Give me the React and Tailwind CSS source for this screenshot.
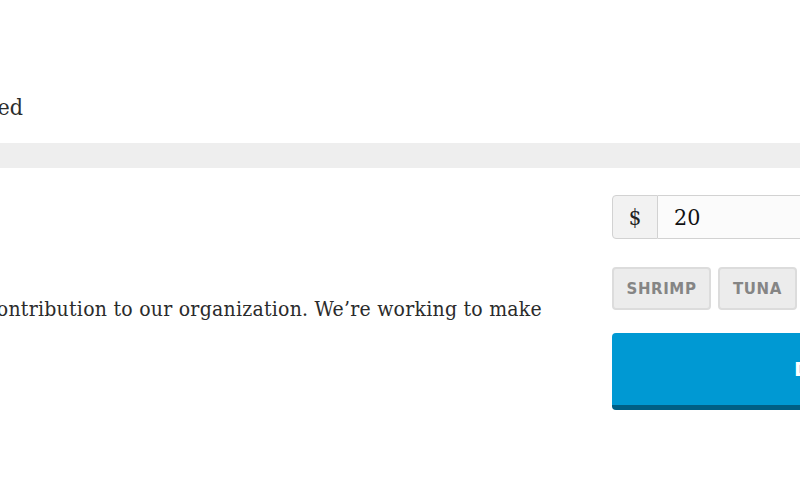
import React from 'react';

const serif = {
    fontFamily: '"DejaVu Serif Condensed", "DejaVu Serif", "Liberation Serif", serif',
    fontStretch: 'condensed',
};

const App = () => {
    return (
        <div className="w-[800px] h-[480px] overflow-hidden bg-white relative">
            {/* Heading tail */}
            <div className="h-[143px] flex items-end pb-[22px]">
                <div className="w-[23px] flex justify-end">
                    <h2 className="whitespace-nowrap text-[23px] leading-[28px] text-[#2b2b2b]" style={serif}>
                        Completed
                    </h2>
                </div>
            </div>

            {/* Gray divider bar */}
            <div className="h-[25px] bg-[#eeeeee]" />

            <div className="flex">
                {/* Left column */}
                <div className="w-[612px] shrink-0 pt-[127px]">
                    <div className="w-[542px] flex justify-end">
                        <p className="whitespace-nowrap text-[21px] leading-[28px] tracking-[0.25px] text-[#2b2b2b]" style={serif}>
                            Your contribution to our organization. We’re working to make
                        </p>
                    </div>
                </div>

                {/* Right column */}
                <div className="w-[300px] shrink-0 pt-[27px]">
                    <div className="flex h-[44px]">
                        <div className="w-[46px] flex items-center justify-center bg-[#f2f2f2] border border-[#d2d2d2] rounded-l-[4px] text-[22px] text-[#222]" style={serif}>
                            $
                        </div>
                        <div className="flex-1 flex items-center pl-[16px] bg-[#fbfbfb] border border-l-0 border-[#d2d2d2] text-[23px] text-[#111]" style={serif}>
                            20
                        </div>
                    </div>

                    <div className="flex gap-[7px] mt-[28px]">
                        {[['SHRIMP', 'w-[99px]'], ['TUNA', 'w-[79px]'], ['WHALE', 'w-[90px]']].map(([l, w]) => (
                            <button
                                key={l}
                                className={`${w} shrink-0 h-[43px] pt-[2px] bg-[#ececec] border-2 border-[#dcdcdc] rounded-[4px] text-[15px] font-bold tracking-[0.6px] text-[#858585]`}
                                style={{ fontFamily: '"DejaVu Sans", sans-serif' }}
                            >
                                {l}
                            </button>
                        ))}
                    </div>

                    <button
                        className="mt-[23px] w-[380px] h-[77px] bg-[#0099d3] border-b-[5px] border-[#005f85] rounded-[4px] text-left pl-[182px] text-white text-[20px] font-bold tracking-[1px]"
                        style={{ fontFamily: '"DejaVu Sans", sans-serif' }}
                    >
                        DONATE
                    </button>
                </div>
            </div>
        </div>
    );
};

export default App;
